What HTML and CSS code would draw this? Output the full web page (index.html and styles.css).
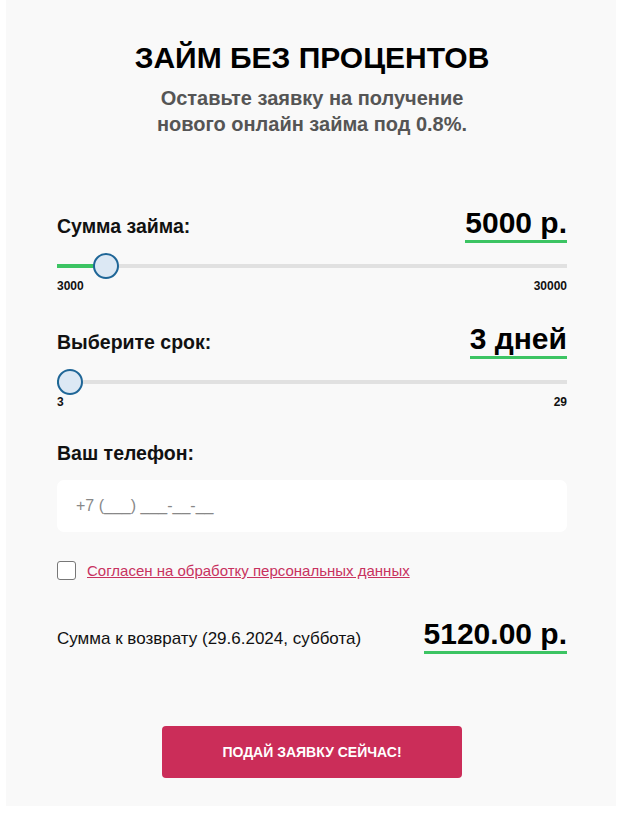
FILE: index.html
```html
<!DOCTYPE html>
<html lang="ru">
<head>
    <meta charset="UTF-8">
    <meta name="viewport" content="width=device-width, initial-scale=1.0">
    <title>Займ без процентов</title>
    <link rel="stylesheet" href="styles.css">
</head>
<body>
    <div class="panel">
        <h1 class="title">ЗАЙМ БЕЗ ПРОЦЕНТОВ</h1>
        <p class="subtitle">Оставьте заявку на получение<br>нового онлайн займа под 0.8%.</p>

        <div class="field field-sum">
            <div class="field-head">
                <span class="label">Сумма займа:</span>
                <span class="value">5000 р.</span>
            </div>
            <div class="slider">
                <div class="track">
                    <div class="fill" style="width: 49px"></div>
                    <div class="thumb" style="left: 49px"></div>
                </div>
                <div class="limits">
                    <span>3000</span>
                    <span>30000</span>
                </div>
            </div>
        </div>

        <div class="field field-term">
            <div class="field-head">
                <span class="label">Выберите срок:</span>
                <span class="value">3 дней</span>
            </div>
            <div class="slider">
                <div class="track">
                    <div class="fill" style="width: 13px"></div>
                    <div class="thumb" style="left: 13px"></div>
                </div>
                <div class="limits">
                    <span>3</span>
                    <span>29</span>
                </div>
            </div>
        </div>

        <div class="field field-phone">
            <div class="label">Ваш телефон:</div>
            <input class="phone" type="text" placeholder="+7 (___) ___-__-__">
        </div>

        <label class="agree">
            <span class="box"></span>
            <a href="#">Согласен на обработку персональных данных</a>
        </label>

        <div class="total">
            <span class="total-text">Сумма к возврату (29.6.2024, суббота)</span>
            <span class="value">5120.00 р.</span>
        </div>

        <div class="actions">
            <button class="submit">ПОДАЙ ЗАЯВКУ СЕЙЧАС!</button>
        </div>
    </div>
</body>
</html>
```

FILE: styles.css
```css
body {
    margin: 0;
    background: #ffffff;
    font-family: 'Liberation Sans', Arial, sans-serif;
    color: #111;
}

.panel {
    margin-left: 6px;
    width: 610px;
    height: 806px;
    box-sizing: border-box;
    padding: 40px 49px 0 51px;
    background: #f9f9f9;
}

.title {
    margin: 0;
    text-align: center;
    font-size: 30px;
    line-height: 36px;
    font-weight: bold;
    color: #000;
}

.subtitle {
    margin: 9px 0 0;
    text-align: center;
    font-size: 20px;
    line-height: 26px;
    font-weight: bold;
    color: #555;
}

.field-sum {
    margin-top: 69px;
}

.field-term {
    margin-top: 29px;
}

.field-head {
    display: flex;
    justify-content: space-between;
    align-items: baseline;
}

.label {
    font-size: 19.5px;
    line-height: 22px;
    font-weight: bold;
    color: #111;
}

.value {
    font-size: 30px;
    line-height: 33px;
    font-weight: bold;
    color: #000;
    padding-bottom: 1px;
    border-bottom: 3px solid #3cc463;
}

.slider {
    margin-top: 21px;
}

.track {
    position: relative;
    height: 4px;
    background: #e1e1e1;
}

.fill {
    height: 4px;
    background: #3cc463;
}

.thumb {
    position: absolute;
    top: -11px;
    width: 22px;
    height: 22px;
    margin-left: -13px;
    border: 2px solid #1f6697;
    border-radius: 50%;
    background: #dce8f4;
}

.limits {
    display: flex;
    justify-content: space-between;
    margin-top: 11px;
    font-size: 12px;
    font-weight: bold;
    color: #111;
}

.field-phone {
    margin-top: 33px;
}

.phone {
    display: block;
    width: 100%;
    height: 52px;
    margin-top: 16px;
    box-sizing: border-box;
    padding: 0 19px;
    border: none;
    border-radius: 7px;
    background: #fff;
    font-family: inherit;
    font-size: 16px;
    outline: none;
}

.phone::placeholder {
    color: #888;
}

.agree {
    display: flex;
    align-items: center;
    gap: 11px;
    margin-top: 29px;
}

.agree .box {
    width: 17px;
    height: 17px;
    border: 1px solid #777;
    border-radius: 3px;
    background: #fff;
}

.agree a {
    font-size: 15px;
    color: #c8325f;
    text-decoration: underline;
}

.total {
    display: flex;
    justify-content: space-between;
    align-items: baseline;
    margin-top: 37px;
}

.total-text {
    font-size: 17px;
    color: #111;
}

.actions {
    display: flex;
    justify-content: center;
    margin-top: 72px;
}

.submit {
    width: 300px;
    height: 52px;
    border: none;
    border-radius: 4px;
    background: #cb2d59;
    color: #fff;
    font-family: inherit;
    font-size: 14px;
    font-weight: bold;
    cursor: pointer;
}
```
